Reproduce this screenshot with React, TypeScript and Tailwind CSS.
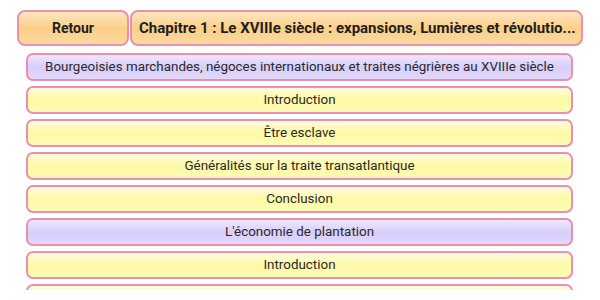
import React from "react";

const rows: { label: string; kind: "p" | "y" }[] = [
  { label: "Bourgeoisies marchandes, négoces internationaux et traites négrières au XVIIIe siècle", kind: "p" },
  { label: "Introduction", kind: "y" },
  { label: "Être esclave", kind: "y" },
  { label: "Généralités sur la traite transatlantique", kind: "y" },
  { label: "Conclusion", kind: "y" },
  { label: "L'économie de plantation", kind: "p" },
  { label: "Introduction", kind: "y" },
  { label: "", kind: "y" },
];

export default function App() {
  return (
    <div className="w-[600px] h-[300px] overflow-hidden bg-white font-['Roboto',sans-serif]">
      <div className="flex gap-[1px] pl-[17px] pr-[17px] pt-[10px]">
        <div className="w-[112px] h-[36px] shrink-0 flex items-center justify-center rounded-[8px] border-2 border-[#ec8fab] bg-gradient-to-b from-[#fde6c0] via-[#fccf88] to-[#fcd9a0] text-[14px] font-bold text-[#1e1e1e]">
          Retour
        </div>
        <div className="flex-1 min-w-0 h-[36px] flex items-center pl-[7px] pr-[4px] rounded-[8px] border-2 border-[#ec8fab] bg-gradient-to-b from-[#fde6c0] via-[#fccf88] to-[#fcd9a0] text-[15px] font-bold text-[#1e1e1e]">
          <span className="whitespace-nowrap">Chapitre 1 : Le XVIIIe siècle : expansions, Lumières et révolutio...</span>
        </div>
      </div>
      <div className="mt-[7px] h-[237px] overflow-hidden flex flex-col gap-[5px] pl-[26px] pr-[27px]">
        {rows.map((r, i) => (
          <div
            key={i}
            className={
              r.kind === "p"
                ? "h-[28px] shrink-0 flex items-center justify-center rounded-[7px] border-2 border-[#ec8fab] bg-gradient-to-b from-[#ede8fd] via-[#d9cefb] to-[#e0d8fc] text-[13.4px] text-[#2a2a2a]"
                : "h-[28px] shrink-0 flex items-center justify-center rounded-[7px] border-2 border-[#ec8fab] bg-gradient-to-b from-[#fefce0] via-[#fdf9a4] to-[#fefbb8] text-[13.4px] text-[#2a2a2a]"
            }
          >
            {r.label}
          </div>
        ))}
      </div>
    </div>
  );
}
